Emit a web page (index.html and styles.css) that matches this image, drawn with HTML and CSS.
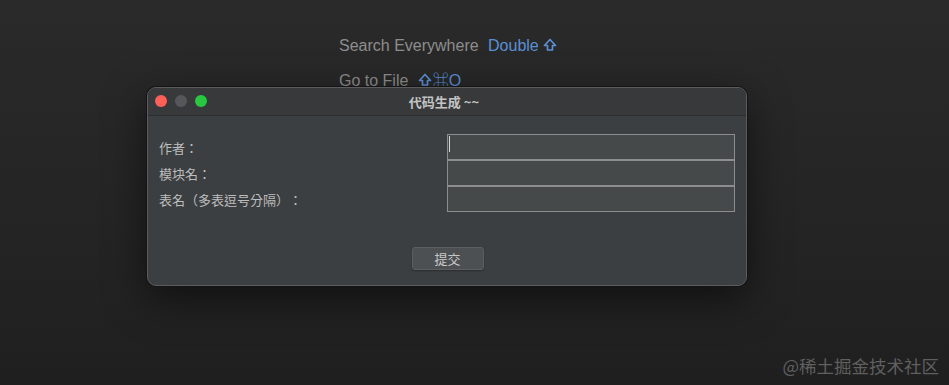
FILE: index.html
```html
<!DOCTYPE html>
<html lang="zh-CN">
<head>
<meta charset="UTF-8" />
<meta name="viewport" content="width=device-width, initial-scale=1" />
<title>代码生成~~</title>
<link rel="stylesheet" href="styles.css">
</head>
<body>

<div class="ide">
  <div class="hints">
    <div class="hint">Search Everywhere <span class="key">Double <svg class="shift" viewBox="0 0 14 14"><path d="M7 1.5 L12.5 7.5 H9.5 V12 H4.5 V7.5 H1.5 Z"/></svg></span></div>
    <div class="hint">Go to File <span class="key"><svg class="shift" viewBox="0 0 14 14"><path d="M7 1.5 L12.5 7.5 H9.5 V12 H4.5 V7.5 H1.5 Z"/></svg>⌘O</span></div>
  </div>

  <div class="dialog">
    <div class="titlebar">
      <div class="lights">
        <span class="light close"></span>
        <span class="light min"></span>
        <span class="light max"></span>
      </div>
      <div class="title">代码生成 ~~</div>
    </div>
    <div class="dialog-body">
      <div class="form" lang="zh-TW">
        <label class="label">作者：</label>
        <div class="field"><span class="caret"></span></div>
        <label class="label">模块名：</label>
        <div class="field"></div>
        <label class="label">表名（多表逗号分隔）：</label>
        <div class="field"></div>
      </div>
      <div class="actions">
        <button class="btn">提交</button>
      </div>
    </div>
  </div>

  <div class="watermark">@稀土掘金技术社区</div>
</div>

</body>
</html>
```

FILE: styles.css
```css
  html, body {
    margin: 0;
    height: 100%;
  }
  body {
    background: #272727;
    font-family: "Liberation Sans", "Noto Sans CJK SC", sans-serif;
    overflow: hidden;
  }
  .ide {
    position: relative;
    height: 100%;
    background: linear-gradient(#2a2a2a, #222 80%, #1f1f1f);
  }
  .hints {
    padding: 36px 0 0 339px;
  }
  .hint {
    font-size: 16px;
    color: #8d8d8d;
    line-height: 20px;
    margin-bottom: 15px;
  }
  .key {
    color: #5b8fd4;
    margin-left: 5px;
  }
  .shift {
    width: 14px;
    height: 14px;
    vertical-align: -1px;
    fill: none;
    stroke: #5b8fd4;
    stroke-width: 1.7;
    stroke-linejoin: round;
    margin-right: 1px;
  }

  /* the dialog window */
  .dialog {
    position: absolute;
    left: 147px;
    top: 87px;
    width: 598px;
    background: #3c3f41;
    border: 1px solid #5b5c5e;
    border-radius: 9px;
    box-shadow: 0 0 0 1px #141414, 0 12px 40px rgba(0, 0, 0, 0.55);
    font-family: "Noto Sans CJK SC", sans-serif;
    overflow: hidden;
  }
  .titlebar {
    position: relative;
    height: 27px;
    background: #38393b;
    border-bottom: 1px solid #2c2d2e;
    display: flex;
    align-items: center;
    justify-content: center;
  }
  .lights {
    position: absolute;
    left: 7px;
    top: 7px;
    display: flex;
    gap: 8px;
  }
  .light {
    width: 12px;
    height: 12px;
    border-radius: 50%;
  }
  .close { background: #fe5f57; }
  .min { background: #55575a; }
  .max { background: #28c840; }
  .title {
    font-size: 13px;
    font-weight: bold;
    color: #c4c4c4;
    margin-left: -6px;
  }

  .dialog-body {
    padding: 18px 10px 15px 11px;
  }
  .form {
    display: grid;
    grid-template-columns: 288px 288px;
    grid-auto-rows: 26px;
    align-items: center;
  }
  .label {
    font-family: "Noto Sans CJK TC", "Noto Sans CJK SC", sans-serif;
    font-size: 13px;
    color: #bdbdbd;
    text-spacing-trim: space-all;
  }
  .field {
    position: relative;
    height: 24px;
    background: #46494a;
    border: 1px solid #8b8d8f;
  }
  .caret {
    position: absolute;
    left: 1px;
    top: 1px;
    width: 1px;
    height: 16px;
    background: #d8d8d8;
  }
  .actions {
    display: flex;
    justify-content: center;
    padding-top: 35px;
  }
  .btn {
    width: 72px;
    height: 23px;
    background: #4c5052;
    border: 1px solid #5c5f61;
    border-radius: 3px;
    color: #c8c8c8;
    font-family: "Noto Sans CJK SC", sans-serif;
    font-size: 13px;
    padding: 0;
    box-shadow: 0 1px 2px rgba(0, 0, 0, 0.3);
  }

  .watermark {
    position: absolute;
    right: 10px;
    bottom: 7px;
    font-family: "Noto Sans CJK SC", sans-serif;
    font-size: 17.5px;
    color: #5f5f5f;
  }
```
